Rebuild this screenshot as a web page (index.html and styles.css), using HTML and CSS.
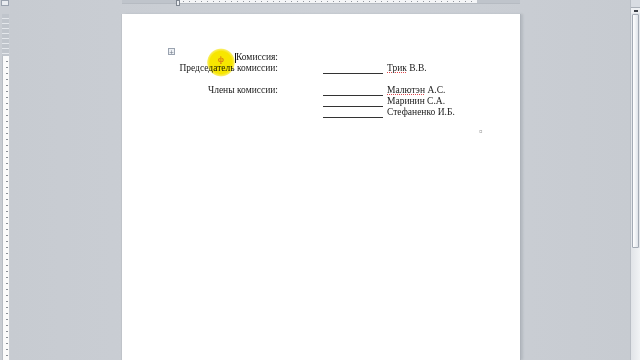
FILE: index.html
```html
<!DOCTYPE html>
<html lang="ru">
<head>
<meta charset="utf-8">
<link rel="stylesheet" href="styles.css">
</head>
<body>
<div class="app">
  <div class="vruler">
    <div class="vr-btn"></div>
    <div class="vr-margin"></div>
    <div class="vr-body"></div>
  </div>
  <div class="work">
    <div class="hruler">
      <div class="hr-margin hr-left"></div>
      <div class="hr-body"></div>
      <div class="hr-margin hr-right"></div>
      <div class="hr-marker"></div>
    </div>
    <div class="page">
      <div class="move-handle">+</div>
      <div class="sheet">
        <div class="lbl">Комиссия:</div><div class="val"></div>
        <div class="lbl">Председатель комиссии:</div><div class="val"><span class="line"></span><span class="sp">Трик</span> В.В.</div>
        <div class="lbl">&nbsp;</div><div class="val"></div>
        <div class="lbl">Члены комиссии:</div><div class="val"><span class="line"></span><span class="sp">Малютэн</span> А.С.</div>
        <div class="lbl">&nbsp;</div><div class="val"><span class="line"></span>Маринин С.А.</div>
        <div class="lbl">&nbsp;</div><div class="val"><span class="line"></span>Стефаненко И.Б.</div>
      </div>
      <div class="cellmark">¤</div>
      <div class="spot"></div>
      <div class="spot-glyph">ф</div>
      <div class="caret"></div>
    </div>
  </div>
  <div class="scroll">
    <div class="sc-top"></div>
    <div class="sc-up"></div>
    <div class="sc-thumb"></div>
    <div class="sc-track"></div>
  </div>
</div>
</body>
</html>
```
FILE: styles.css
```css
html, body {
  margin: 0;
  padding: 0;
  width: 640px;
  height: 360px;
  overflow: hidden;
  background: #c9cdd3;
}
.app {
  display: flex;
  width: 640px;
  height: 360px;
}
.vruler {
  width: 10px;
  display: flex;
  flex-direction: column;
  background: #c9cdd3;
}
.vr-btn {
  height: 6px;
  margin: 0 1px;
  background: #e9ecf0;
  border: 1px solid #9aa2ae;
  box-sizing: border-box;
}
.vr-margin {
  height: 42px;
  margin: 8px 1px 0 2px;
  background: repeating-linear-gradient(to bottom, #c0c5cc 0 4px, #e4e7eb 4px 5px);
}
.vr-body {
  flex: 1;
  margin: 0 1px 0 2px;
  background:
    repeating-linear-gradient(to bottom, transparent 0 5px, #8a8f96 5px 6px) 3px 0 / 2px 100% no-repeat,
    #fbfbfb;
  border-left: 1px solid #b8bdc4;
}
.work {
  flex: 1;
  position: relative;
  display: flex;
  flex-direction: column;
  background: linear-gradient(to right, #c7cbd1, #cdd1d7 50%, #c7cbd1);
}
.hruler {
  position: relative;
  margin-left: 112px;
  width: 398px;
  height: 3px;
  display: flex;
  border-bottom: 1px solid #b6bbc2;
}
.hr-margin {
  background: #bfc4cb;
}
.hr-left { width: 56px; }
.hr-right { width: 43px; }
.hr-body {
  flex: 1;
  background:
    repeating-linear-gradient(to right, transparent 0 5px, #8f949b 5px 6px) 0 1px / 100% 1px no-repeat,
    #f4f5f7;
}
.hr-marker {
  position: absolute;
  left: 54px;
  top: 0;
  width: 4px;
  height: 6px;
  background: #e9ebef;
  border: 1px solid #7e858f;
  box-sizing: border-box;
}
.page {
  position: relative;
  margin: 10px 0 0 112px;
  width: 398px;
  flex: 1;
  background: #ffffff;
  box-shadow: 1px 0 0 #aeb3ba, 3px 0 2px #b5bac1, -1px 0 0 #bfc3c9;
  font-family: "Liberation Serif", "Times New Roman", serif;
  font-size: 9.5px;
  color: #1a1a1a;
}
.sheet {
  display: grid;
  grid-template-columns: 108px 150px;
  column-gap: 45px;
  padding: 38px 0 0 48px;
  line-height: 11px;
}
.lbl {
  text-align: right;
  white-space: nowrap;
}
.val {
  white-space: nowrap;
}
.line {
  display: inline-block;
  width: 60px;
  height: 10px;
  border-bottom: 1px solid #333;
  margin-right: 4px;
  vertical-align: -3px;
}
.sp {
  text-decoration: underline dotted #e0474a;
  text-decoration-thickness: 1px;
  text-underline-offset: 1px;
}
.cellmark {
  margin: 10px 0 0 357px;
  font-size: 7px;
  line-height: 8px;
  color: #8c8c8c;
}
.move-handle {
  position: absolute;
  left: 46px;
  top: 34px;
  width: 5px;
  height: 5px;
  border: 1px solid #9aa3b0;
  background: #eef1f5;
  font-family: "DejaVu Sans", sans-serif;
  font-size: 6px;
  line-height: 5px;
  text-align: center;
  color: #6e7886;
}
.spot {
  position: absolute;
  left: 85px;
  top: 34px;
  width: 28px;
  height: 29px;
  border-radius: 50%;
  background: radial-gradient(circle, #f7e600 0 55%, rgba(248, 232, 40, 0.75) 66%, rgba(255, 245, 120, 0) 71%);
  mix-blend-mode: multiply;
}
.spot-glyph {
  position: absolute;
  left: 96px;
  top: 41px;
  font-size: 9px;
  line-height: 9px;
  color: #d0561a;
}
.caret {
  position: absolute;
  left: 113px;
  top: 39px;
  width: 1px;
  height: 10px;
  background: #111;
}
.scroll {
  width: 9px;
  display: flex;
  flex-direction: column;
  background: #e4e7eb;
  border-left: 1px solid #b9bec5;
}
.sc-top {
  height: 7px;
  background: #d8dce2;
  border-bottom: 1px solid #aab0b8;
}
.sc-up {
  height: 5px;
  background:
    linear-gradient(#3a3f46, #3a3f46) center / 4px 2px no-repeat,
    #eef0f3;
}
.sc-thumb {
  height: 232px;
  margin: 1px 1px 0 1px;
  border: 1px solid #a3aab4;
  border-radius: 1px;
  background: linear-gradient(to right, #ffffff, #eceff3 60%, #dfe3e8);
}
.sc-track {
  flex: 1;
  background: linear-gradient(to right, #e1e4e8, #f1f3f5);
}
```
